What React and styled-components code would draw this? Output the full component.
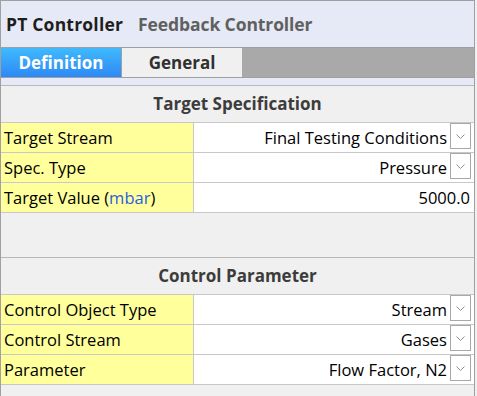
import React from "react";
import styled, { createGlobalStyle } from "styled-components";

const GlobalStyle = createGlobalStyle`
  html, body { margin: 0; padding: 0; background: #f0f0f0; }
  body { font-family: "Open Sans", "Noto Sans", sans-serif; color: #000; }
  * { box-sizing: border-box; }
`;

const Panel = styled.div`
  width: 475px;
  height: 396px;
  border: 1px solid #a0a0a0;
  border-bottom: none;
  background: #f0f0f0;
  display: flex;
  flex-direction: column;
  overflow: hidden;
`;

const Header = styled.div`
  height: 46px;
  background: #e6eaf6;
  display: flex;
  align-items: center;
  gap: 15px;
  padding: 0 0 0 5px;
`;

const Title = styled.span`
  font-weight: 700;
  font-size: 17.5px;
  letter-spacing: ${(p) => (p.$muted ? "-0.1px" : "0.2px")};
  color: ${(p) => (p.$muted ? "#606060" : "#1e1e1e")};
`;

const TabBar = styled.div`
  display: flex;
  height: 31px;
  border-top: 1px solid #a0a0a0;
  border-bottom: 1px solid #a0a0a0;
  background: #a9a9a9;
`;

const Tab = styled.div`
  width: ${(p) => p.$w}px;
  display: flex;
  align-items: center;
  justify-content: center;
  font-weight: 700;
  font-size: 17px;
  padding-bottom: 1px;
  color: ${(p) => (p.$active ? "#ffffff" : "#303030")};
  background: ${(p) =>
    p.$active ? "linear-gradient(#40bafd, #2d88f6)" : "#f0f0f0"};
  border-right: ${(p) => (p.$active ? "1px solid #a0a0a0" : "none")};
`;

const Strip = styled.div`
  height: 7px;
  background: #e6eaf6;
`;

const Section = styled.div`
  border-top: 1px solid #b8b8b8;
  display: flex;
  flex-direction: column;
`;

const SectionTitle = styled.div`
  height: 37px;
  border-bottom: 1px solid #c8c8c8;
  display: flex;
  align-items: center;
  justify-content: center;
  font-weight: 700;
  font-size: 17px;
  color: #3c3c3c;
  padding-bottom: 1px;
`;

const Row = styled.div`
  display: grid;
  grid-template-columns: 193px 1fr;
  height: 30px;
  border-bottom: 1px solid #c8c8c8;
  font-size: 16.5px;
`;

const Label = styled.div`
  background: #ffff9c;
  border-right: 1px solid #c8c8c8;
  display: flex;
  align-items: center;
  padding: 0 0 1px 3px;
  white-space: nowrap;
`;

const Unit = styled.span`
  color: #1f5fe0;
`;

const Value = styled.div`
  background: #ffffff;
  display: flex;
  align-items: center;
  justify-content: flex-end;
  gap: 3px;
  padding: 0 3px 1px 0;
  white-space: nowrap;
`;

const ValueText = styled.span`
  padding-right: ${(p) => (p.$plain ? "1px" : "0")};
`;

const DropButton = styled.div`
  width: 21px;
  height: 26px;
  margin-bottom: 2px;
  border: 1px solid #a8a8a8;
  background: #fff;
  display: flex;
  align-items: center;
  justify-content: center;
`;

const Spacer = styled.div`
  height: 44px;
`;

function Chevron() {
  return (
    <svg width="9" height="5" viewBox="0 0 9 5">
      <path d="M0.5 0.5 L4.5 4.5 L8.5 0.5" fill="none" stroke="#909090" strokeWidth="1" />
    </svg>
  );
}

function DataRow({ label, unit, value, dropdown }) {
  return (
    <Row>
      <Label>
        {label}
        {unit && (
          <>
            &nbsp;(<Unit>{unit}</Unit>)
          </>
        )}
      </Label>
      <Value>
        <ValueText $plain={!dropdown}>{value}</ValueText>
        {dropdown && (
          <DropButton>
            <Chevron />
          </DropButton>
        )}
      </Value>
    </Row>
  );
}

export default function App() {
  return (
    <>
      <GlobalStyle />
      <Panel>
        <Header>
          <Title>PT Controller</Title>
          <Title $muted>Feedback Controller</Title>
        </Header>
        <TabBar>
          <Tab $active $w={121}>Definition</Tab>
          <Tab $w={120}>General</Tab>
        </TabBar>
        <Strip />
        <Section>
          <SectionTitle>Target Specification</SectionTitle>
          <DataRow label="Target Stream" value="Final Testing Conditions" dropdown />
          <DataRow label="Spec. Type" value="Pressure" dropdown />
          <DataRow label="Target Value" unit="mbar" value="5000.0" />
        </Section>
        <Spacer />
        <Section>
          <SectionTitle>Control Parameter</SectionTitle>
          <DataRow label="Control Object Type" value="Stream" dropdown />
          <DataRow label="Control Stream" value="Gases" dropdown />
          <DataRow label="Parameter" value="Flow Factor, N2" dropdown />
        </Section>
      </Panel>
    </>
  );
}
